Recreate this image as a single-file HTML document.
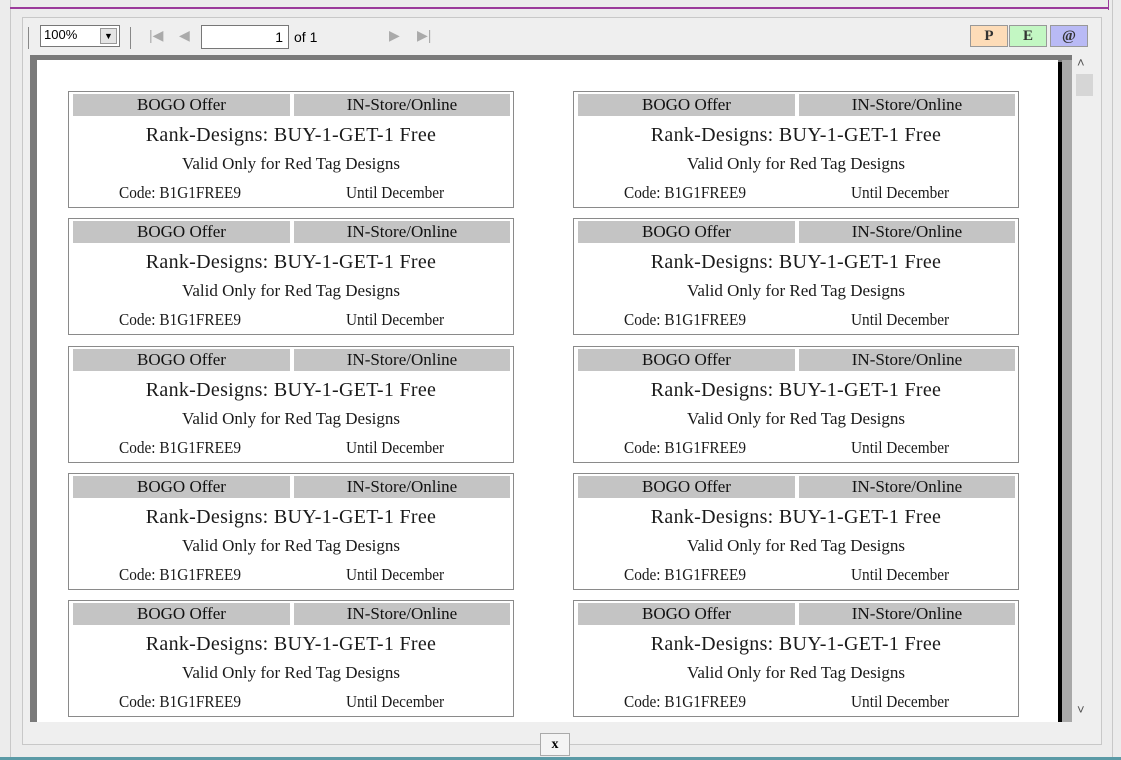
<!DOCTYPE html>
<html><head><style>
body{margin:0;width:1121px;height:760px;background:#ececec;position:relative;overflow:hidden;font-family:"Liberation Serif",serif;}
.a{position:absolute;}
.cp{position:absolute;width:446px;height:117px;border:1px solid #8a8a8a;background:#fff;box-sizing:border-box;color:#1a1a1a;}
.h{position:absolute;top:2px;height:22px;background:#c4c4c4;font-size:17px;line-height:22px;text-align:center;color:#111;}
.t1{position:absolute;top:32px;left:0;width:100%;text-align:center;font-size:20px;letter-spacing:0.3px;}
.t2{position:absolute;top:62px;left:0;width:100%;text-align:center;font-size:17px;}
.c{position:absolute;top:91px;font-size:17px;transform:scaleX(0.9);transform-origin:left;}
.btn{position:absolute;top:25px;width:38px;height:22px;border:1px solid #999;box-sizing:border-box;font-family:"Liberation Serif",serif;font-size:15px;text-align:center;line-height:20px;font-weight:bold;color:#333;}
</style></head><body>
<div class="a" style="left:10px;top:0;width:1px;height:760px;background:#c8c8c8"></div>
<div class="a" style="left:10px;top:7px;width:1099px;height:2px;background:#9b3b9b"></div>
<div class="a" style="left:1108px;top:0;width:1px;height:10px;background:#9b3b9b"></div>
<div class="a" style="left:1112px;top:0;width:1px;height:760px;background:#c8c8c8"></div>
<div class="a" style="left:22px;top:17px;width:1078px;height:726px;border:1px solid #c8c8c8;background:#efefef"></div>
<div class="a" style="left:28px;top:27px;width:2px;height:22px;border-left:1px solid #888"></div>
<div class="a" style="left:40px;top:25px;width:80px;height:22px;border:1px solid #777;background:#fff;box-sizing:border-box;font-family:'Liberation Sans',sans-serif;font-size:13px;padding-left:3px;line-height:18px">100%</div>
<div class="a" style="left:100px;top:28px;width:17px;height:16px;background:#e4e4e4;border:1px solid #999;box-sizing:border-box;font-size:9px;text-align:center;line-height:15px">▼</div>
<div class="a" style="left:130px;top:27px;width:2px;height:22px;border-left:1px solid #888"></div>
<div class="a" style="left:149px;top:27px;color:#aaa;font-size:14px;font-family:'Liberation Sans',sans-serif">|◀</div>
<div class="a" style="left:179px;top:27px;color:#aaa;font-size:14px;font-family:'Liberation Sans',sans-serif">◀</div>
<div class="a" style="left:201px;top:25px;width:88px;height:24px;border:1px solid #777;background:#fff;box-sizing:border-box;font-family:'Liberation Sans',sans-serif;font-size:14px;text-align:right;padding-right:5px;line-height:22px">1</div>
<div class="a" style="left:294px;top:29px;font-family:'Liberation Sans',sans-serif;font-size:14px">of 1</div>
<div class="a" style="left:389px;top:27px;color:#aaa;font-size:14px;font-family:'Liberation Sans',sans-serif">▶</div>
<div class="a" style="left:417px;top:27px;color:#aaa;font-size:14px;font-family:'Liberation Sans',sans-serif">▶|</div>
<div class="btn" style="left:970px;background:#fddcb8">P</div>
<div class="btn" style="left:1009px;background:#c3f7c3">E</div>
<div class="btn" style="left:1050px;background:#b9baf5">@</div>
<div class="a" style="left:30px;top:55px;width:1042px;height:667px;background:#7a7a7a"></div>
<div class="a" style="left:1062px;top:60px;width:10px;height:662px;background:#a8a8a8"></div>
<div class="a" style="left:37px;top:60px;width:1021px;height:662px;background:#fff"></div>
<div class="a" style="left:1058px;top:62px;width:4px;height:660px;background:#000"></div>
<div class="a" style="left:1072px;top:55px;width:23px;height:667px;background:#efefef"></div>
<div class="a" style="left:1076px;top:74px;width:17px;height:22px;background:#d6d6d6"></div>
<div class="a" style="left:1077px;top:55px;font-size:13px;color:#555;font-family:'Liberation Sans',sans-serif">˄</div>
<div class="a" style="left:1077px;top:702px;font-size:13px;color:#555;font-family:'Liberation Sans',sans-serif">˅</div>
<div class="a" style="left:540px;top:733px;width:30px;height:23px;background:#f4f4f4;border:1px solid #aaa;box-sizing:border-box;text-align:center;font-weight:bold;font-size:14px;line-height:21px">x</div>
<div class="a" style="left:0;top:757px;width:1121px;height:3px;background:#5b9aa6"></div>
<div id="cps"></div>
<script>
var h='';var tops=[91,218,346,473,600];var lefts=[68,573];
tops.forEach(function(t){lefts.forEach(function(l){
h+='<div class="cp" style="left:'+l+'px;top:'+t+'px"><div class="h" style="left:4px;width:217px">BOGO Offer</div><div class="h" style="left:225px;width:216px">IN-Store/Online</div><div class="t1">Rank-Designs: BUY-1-GET-1 Free</div><div class="t2">Valid Only for Red Tag Designs</div><div class="c" style="left:50px">Code: B1G1FREE9</div><div class="c" style="left:277px">Until December</div></div>';});});
document.getElementById('cps').innerHTML=h;
</script>
</body></html>
